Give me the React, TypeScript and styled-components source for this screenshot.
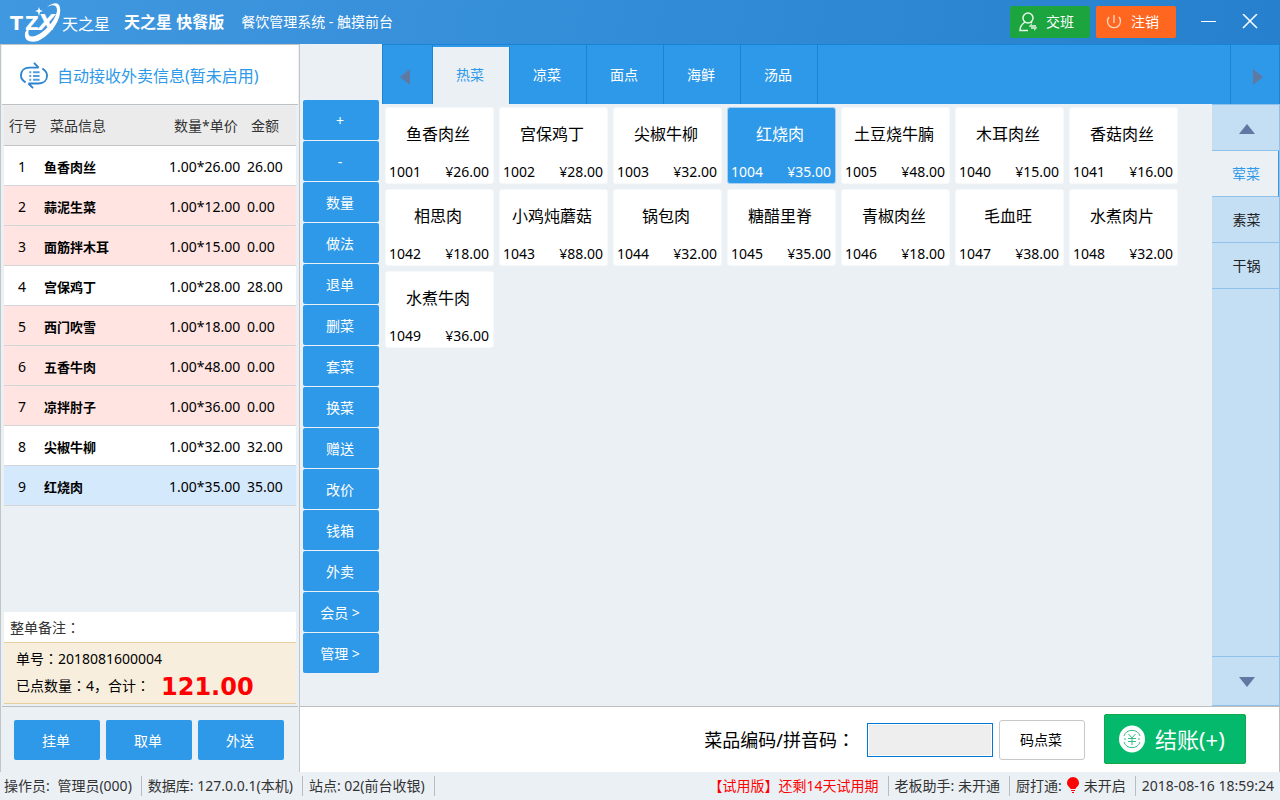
import React from 'react';
import styled, { createGlobalStyle } from 'styled-components';

const blue = '#2e99e8';
const line = '#1c82d3';
const page = '#ebf0f5';

const GlobalStyle = createGlobalStyle`
  * { box-sizing: border-box; }
  body {
    margin: 0;
    background: ${page};
    color: #000;
    font: 14px/20px "Noto Sans", "Noto Sans CJK SC", sans-serif;
  }
  button, input { font: inherit; color: inherit; }
  button { border: 0; padding: 0; cursor: pointer; }
  svg { display: block; flex: none; }
`;

const Page = styled.div`
  display: flex;
  flex-direction: column;
  min-height: 100vh;
`;

const Header = styled.header`
  display: flex;
  align-items: center;
  height: 44px;
  padding: 0 20px 0 8px;
  color: #fff;
  background: linear-gradient(100deg, #4098e0, #2680cd);
`;

const Title = styled.h1`
  margin: 0 17px 0 14px;
  font-size: 16px;
  line-height: 24px;
  font-weight: 600;
`;

const HeaderButtons = styled.div`
  display: flex;
  align-items: center;
  gap: 6px;
  margin-left: auto;
`;

const HeaderButton = styled.button<{ $color: string }>`
  display: flex;
  align-items: center;
  gap: 8px;
  width: 80px;
  height: 32px;
  padding-left: 9px;
  border-radius: 2px;
  color: #fff;
  background: ${(p) => p.$color};
`;

const WindowButton = styled.button`
  display: flex;
  align-items: center;
  justify-content: center;
  width: 20px;
  height: 32px;
  margin-left: 16px;
  color: #fff;
  background: none;
`;

const Body = styled.div`
  display: flex;
  flex: 1;
`;

const OrderPanel = styled.section`
  display: flex;
  flex-direction: column;
  flex: none;
  width: 300px;
  border: 1px solid #c2c5c8;
  border-bottom: 0;
`;

const AutoReceive = styled.button`
  display: flex;
  align-items: center;
  gap: 9px;
  height: 60px;
  margin: 0 1px;
  padding: 2px 0 0 18px;
  border-bottom: 1px solid #c0c0c0;
  background: #fff;
  color: ${blue};
  font-size: 16px;
`;

const OrderTable = styled.table`
  margin: 1px 3px 0;
  border-spacing: 0;
  table-layout: fixed;
`;

const HeadCell = styled.th<{ $width: number; $indent?: number }>`
  width: ${(p) => p.$width}px;
  height: 40px;
  padding: 0 0 0 ${(p) => p.$indent ?? 5}px;
  border-bottom: 1px solid #c4c4c4;
  background: #ebebeb;
  color: #333;
  font-weight: 400;
  text-align: left;
  white-space: nowrap;
`;

const rowColors = { plain: '#fff', free: '#ffe4e1', selected: '#d5e9fd' };

const OrderRow = styled.tr<{ $kind: keyof typeof rowColors }>`
  background: ${(p) => rowColors[p.$kind]};
`;

const Cell = styled.td<{ $center?: boolean; $bold?: boolean }>`
  height: 40px;
  padding: 2px ${(p) => (p.$center ? 4 : 0)}px 0 0;
  border-bottom: 1px solid #d3d6d9;
  text-align: ${(p) => (p.$center ? 'center' : 'left')};
  font-size: ${(p) => (p.$bold ? 13 : 14)}px;
  font-weight: ${(p) => (p.$bold ? 700 : 400)};
  white-space: nowrap;
`;

const Remark = styled.div`
  height: 31px;
  margin: auto 3px 0;
  padding: 6px 6px 0;
  border-bottom: 1px solid #e6cf9d;
  background: #fff;
  color: #333;
`;

const Summary = styled.div`
  height: 61px;
  margin: 0 3px 2px;
  padding: 6px 12px 0;
  border-bottom: 1px solid #e6cf9d;
  background: #f8eedd;
`;

const TotalLine = styled.div`
  display: flex;
  align-items: center;
  height: 34px;
`;

const Colon = styled.span`
  font-family: "Noto Sans CJK TC", sans-serif;
  line-height: 1;
`;

const Total = styled.strong`
  margin-left: 11px;
  padding-top: 2px;
  color: #f00;
  font: 700 24px/34px "DejaVu Sans", sans-serif;
`;

const OrderButtons = styled.div`
  display: flex;
  gap: 6px;
  height: 66px;
  margin: 0 1px;
  padding: 13px 13px 13px 12px;
  border-top: 1px solid #bdbdbd;
`;

const BlueButton = styled.button`
  flex: none;
  width: 86px;
  height: 40px;
  padding: 2px 2px 0 0;
  border-radius: 2px;
  background: ${blue};
  color: #fff;
  white-space: pre;
`;

const Main = styled.main`
  display: flex;
  flex-direction: column;
  flex: 1;
  min-width: 0;
`;

const Workspace = styled.div`
  display: flex;
  flex: 1;
`;

const Actions = styled.nav`
  display: flex;
  flex-direction: column;
  flex: none;
  gap: 1px;
  width: 82px;
  padding: 56px 3px 0;
`;

const ActionButton = styled(BlueButton)`
  width: 76px;
`;

const Menu = styled.section`
  display: flex;
  flex-direction: column;
  flex: 1;
  min-width: 0;
`;

const Tabs = styled.nav`
  display: flex;
  height: 60px;
  border: 1px solid ${line};
  border-bottom: 0;
  background: ${blue};
`;

const Tab = styled.button<{ $active?: boolean }>`
  width: 77px;
  margin-top: ${(p) => (p.$active ? 2 : 0)}px;
  padding: 0 2px ${(p) => (p.$active ? 2 : 0)}px 0;
  border-right: 1px solid ${line};
  background: ${(p) => (p.$active ? page : blue)};
  color: ${(p) => (p.$active ? blue : '#fff')};
`;

const TabArrow = styled.button<{ $end?: boolean }>`
  display: flex;
  align-items: center;
  justify-content: center;
  width: ${(p) => (p.$end ? 49 : 50)}px;
  margin-left: ${(p) => (p.$end ? 'auto' : 0)};
  padding: ${(p) => (p.$end ? '5px 0 0 6px' : '5px 6px 0 0')};
  border-${(p) => (p.$end ? 'left' : 'right')}: 1px solid ${line};
  background: none;
`;

const MenuBody = styled.div`
  display: flex;
  flex: 1;
`;

const Dishes = styled.div`
  display: grid;
  flex: 1;
  grid-template-columns: repeat(auto-fill, 109px);
  grid-auto-rows: 77px;
  align-content: start;
  gap: 5px;
  padding: 3px;
`;

const DishCard = styled.button<{ $active?: boolean }>`
  display: flex;
  flex-direction: column;
  justify-content: space-between;
  padding: 15px 4px 1px 3px;
  border: 1px solid ${(p) => (p.$active ? '#a5d2f4' : '#f6f9fb')};
  border-radius: 3px;
  background: ${(p) => (p.$active ? blue : '#fff')};
  color: ${(p) => (p.$active ? '#fff' : '#000')};
`;

const DishName = styled.span`
  align-self: center;
  padding-right: 2px;
  font-size: 16px;
  line-height: 22px;
`;

const DishInfo = styled.span`
  display: flex;
  justify-content: space-between;
  width: 100%;
`;

const Categories = styled.nav`
  display: flex;
  flex-direction: column;
  width: 68px;
  border-top: 1px solid #8fc1ea;
  border-right: 1px solid #8fc1ea;
  background: #c4dff4;
`;

const Category = styled.button<{ $active?: boolean; $last?: boolean }>`
  display: flex;
  align-items: center;
  justify-content: center;
  height: ${(p) => (p.$last ? 50 : 46)}px;
  margin-top: ${(p) => (p.$last ? 'auto' : 0)};
  padding-left: 2px;
  border-bottom: 1px solid #8fc1ea;
  border-top: ${(p) => (p.$last ? 1 : 0)}px solid #8fc1ea;
  border-right: ${(p) => (p.$active ? 1 : 0)}px solid ${blue};
  background: ${(p) => (p.$active ? page : 'transparent')};
  color: ${(p) => (p.$active ? blue : '#222')};
`;

const Checkout = styled.form`
  display: flex;
  align-items: center;
  justify-content: flex-end;
  height: 66px;
  padding-right: 33px;
  border-top: 1px solid #bdbdbd;
  border-right: 1px solid #bdbdbd;
  background: #fff;
`;

const CodeLabel = styled.label`
  font-size: 18px;
  line-height: 24px;
`;

const CodeInput = styled.input`
  width: 126px;
  height: 34px;
  margin: 0 6px 0 12px;
  padding: 0 6px;
  border: 1px solid #0078d7;
  background: #eee;
  box-shadow: inset 0 0 0 1px #fff;
`;

const CodeButton = styled.button`
  width: 86px;
  height: 40px;
  padding: 1px 2px 0 0;
  border: 1px solid #c8c8c8;
  border-radius: 3px;
  background: #fff;
`;

const PayButton = styled.button`
  display: flex;
  align-items: center;
  gap: 10px;
  width: 142px;
  height: 50px;
  margin: 0 0 2px 19px;
  padding-left: 14px;
  border: 1px solid #12a84a;
  border-radius: 2px;
  background: #04b96c;
  color: #fff;
  font-size: 22px;
  line-height: 28px;
`;

const Status = styled.footer`
  display: flex;
  height: 28px;
  padding: 4px 6px 4px 4px;
  color: #333;
  white-space: nowrap;
`;

const StatusItem = styled.span<{ $alert?: boolean; $push?: boolean; $bare?: boolean }>`
  display: flex;
  gap: 4px;
  margin-left: ${(p) => (p.$push ? 'auto' : 0)};
  padding-right: ${(p) => (p.$bare ? 0 : 9)}px;
  margin-right: ${(p) => (p.$bare ? 0 : 6)}px;
  border-right: ${(p) => (p.$bare ? 0 : 1)}px solid #b9bcc0;
  color: ${(p) => (p.$alert ? '#f00' : 'inherit')};
`;

const Logo = () => (
  <svg width="102" height="42" viewBox="0 0 102 42" fill="#fff" aria-label="TZX 天之星" role="img">
    <g fontFamily="DejaVu Sans" fontWeight="700">
      <text x="2" y="29" fontSize="19">T</text>
      <text x="17" y="29" fontSize="19">Z</text>
      <text x="30" y="29" fontSize="22" fontStyle="italic">X</text>
    </g>
    <path d="M39 6C46 1 51 1 52 7C54 18 43 34 30 40C22 42 16 40 17 32C18 29 20 28 22 26C19 32 20 37 27 35C37 32 49 17 49 9C49 4 45 3 39 6Z" />
    <path d="M31 6L32 9L35 10L32 11L31 15L30 11L27 10L30 9Z" />
    <text x="54" y="29" fontSize="16" fontFamily="Noto Sans CJK SC">天之星</text>
  </svg>
);

const ReceiveIcon = () => (
  <svg width="28" height="28" viewBox="0 0 30 30" fill="none" stroke="#2b84d0" strokeWidth="2">
    <path d="M6 22C3 20 1 18 1 14.500C1 9 5 6 10 6H20M15 1L20 6M24 7C27 9 29 11 29 14.500C29 20 25 23 20 23H9M14 28L9 23" />
    <path d="M10 11H12M14 11H21M10 15H12M14 15H21M10 19H12M14 19H21" stroke="#4e9ede" />
  </svg>
);

const ShiftIcon = () => (
  <svg width="19" height="20" viewBox="0 0 19 20" fill="none" stroke="#e6f8e9" strokeWidth="1.500">
    <circle cx="9" cy="6" r="5" />
    <path d="M6 10C3 12 1 14 1 18.500H9M12 10L13 11" />
    <path d="M10 14L13 11V13H17V15H10ZM18 16L15 19V17H12V15H18Z" fill="#b4e2bd" stroke="none" />
  </svg>
);

const PowerIcon = () => (
  <svg width="18" height="18" viewBox="0 0 18 18" fill="none" stroke="#ffd3bf" strokeWidth="1.400">
    <path d="M4 4A6.500 6.500 0 1 0 14 4M9 2V10" />
  </svg>
);

const CoinIcon = () => (
  <svg width="26" height="28" viewBox="0 0 26 28">
    <ellipse cx="13" cy="14" rx="13" ry="13.500" fill="#fff" />
    <g fill="none" stroke="#35bd86" strokeWidth="1">
      <path d="M5 11A8.500 8.500 0 0 1 21 11M5 17A8.500 8.500 0 0 0 21 17M5 14H7M19 14H21" />
      <path d="M9.500 9L13 13L16.500 9M9 13.500H17M9 16.500H17M13 13V20" />
    </g>
  </svg>
);

const BulbIcon = () => (
  <svg width="14" height="18" viewBox="0 0 14 18" fill="#f00">
    <path d="M7 1A6 6 0 0 1 13 7C13 10 10 11 9.500 13H4.500C4 11 1 10 1 7A6 6 0 0 1 7 1Z" />
    <path d="M5 14H9V15H5ZM6 16H8V17H6Z" />
  </svg>
);

const arrowPaths = {
  left: 'M13 0V16L3 8Z',
  right: 'M3 0V16L13 8Z',
  up: 'M0 14H16L8 4Z',
  down: 'M0 4H16L8 14Z',
};

const Arrow = ({ to }: { to: keyof typeof arrowPaths }) => (
  <svg width="16" height="16" viewBox="0 0 16 16" fill="#5f79a3">
    <path d={arrowPaths[to]} />
  </svg>
);

const orders: [string, string, string, keyof typeof rowColors][] = [
  ['鱼香肉丝', '1.00*26.00', '26.00', 'plain'],
  ['蒜泥生菜', '1.00*12.00', '0.00', 'free'],
  ['面筋拌木耳', '1.00*15.00', '0.00', 'free'],
  ['宫保鸡丁', '1.00*28.00', '28.00', 'plain'],
  ['西门吹雪', '1.00*18.00', '0.00', 'free'],
  ['五香牛肉', '1.00*48.00', '0.00', 'free'],
  ['凉拌肘子', '1.00*36.00', '0.00', 'free'],
  ['尖椒牛柳', '1.00*32.00', '32.00', 'plain'],
  ['红烧肉', '1.00*35.00', '35.00', 'selected'],
];

const actions = [
  '+', '-', '数量', '做法', '退单', '删菜', '套菜', '换菜',
  '赠送', '改价', '钱箱', '外卖', '会员 >', '管理 >',
];

const tabs = ['热菜', '凉菜', '面点', '海鲜', '汤品'];

const dishes: [string, string, string][] = [
  ['鱼香肉丝', '1001', '26.00'],
  ['宫保鸡丁', '1002', '28.00'],
  ['尖椒牛柳', '1003', '32.00'],
  ['红烧肉', '1004', '35.00'],
  ['土豆烧牛腩', '1005', '48.00'],
  ['木耳肉丝', '1040', '15.00'],
  ['香菇肉丝', '1041', '16.00'],
  ['相思肉', '1042', '18.00'],
  ['小鸡炖蘑菇', '1043', '88.00'],
  ['锅包肉', '1044', '32.00'],
  ['糖醋里脊', '1045', '35.00'],
  ['青椒肉丝', '1046', '18.00'],
  ['毛血旺', '1047', '38.00'],
  ['水煮肉片', '1048', '32.00'],
  ['水煮牛肉', '1049', '36.00'],
];

export default function App() {
  return (
    <>
      <GlobalStyle />
      <Page>
        <Header>
          <Logo />
          <Title>天之星 快餐版</Title>
          <span>餐饮管理系统 - 触摸前台</span>
          <HeaderButtons>
            <HeaderButton $color="#1ca53f"><ShiftIcon />交班</HeaderButton>
            <HeaderButton $color="#ff6620"><PowerIcon />注销</HeaderButton>
            <WindowButton aria-label="最小化">
              <svg width="16" height="16" stroke="currentColor"><path d="M1 7.500H16" /></svg>
            </WindowButton>
            <WindowButton aria-label="关闭">
              <svg width="16" height="16" stroke="currentColor" strokeWidth="1.500"><path d="M1 0L15 14M15 0L1 14" /></svg>
            </WindowButton>
          </HeaderButtons>
        </Header>

        <Body>
          <OrderPanel>
            <AutoReceive><ReceiveIcon />自动接收外卖信息(暂未启用)</AutoReceive>
            <OrderTable>
              <thead>
                <tr>
                  <HeadCell $width={40}>行号</HeadCell>
                  <HeadCell $width={125} $indent={6}>菜品信息</HeadCell>
                  <HeadCell $width={78}>数量*单价</HeadCell>
                  <HeadCell $width={49} $indent={4}>金额</HeadCell>
                </tr>
              </thead>
              <tbody>
                {orders.map(([name, qty, sum, kind], i) => (
                  <OrderRow key={name} $kind={kind}>
                    <Cell $center>{i + 1}</Cell>
                    <Cell $bold>{name}</Cell>
                    <Cell>{qty}</Cell>
                    <Cell>{sum}</Cell>
                  </OrderRow>
                ))}
              </tbody>
            </OrderTable>
            <Remark>整单备注<Colon>：</Colon></Remark>
            <Summary>
              <div>单号<Colon>：</Colon>2018081600004</div>
              <TotalLine>
                <span>已点数量<Colon>：</Colon>4，合计<Colon>：</Colon></span>
                <Total>121.00</Total>
              </TotalLine>
            </Summary>
            <OrderButtons>
              <BlueButton>挂单</BlueButton>
              <BlueButton>取单</BlueButton>
              <BlueButton>外送</BlueButton>
            </OrderButtons>
          </OrderPanel>

          <Main>
            <Workspace>
              <Actions>
                {actions.map((a) => <ActionButton key={a}>{a}</ActionButton>)}
              </Actions>
              <Menu>
                <Tabs>
                  <TabArrow aria-label="上一页"><Arrow to="left" /></TabArrow>
                  {tabs.map((t, i) => <Tab key={t} $active={i === 0}>{t}</Tab>)}
                  <TabArrow $end aria-label="下一页"><Arrow to="right" /></TabArrow>
                </Tabs>
                <MenuBody>
                  <Dishes>
                    {dishes.map(([name, code, price]) => (
                      <DishCard key={code} $active={code === '1004'}>
                        <DishName>{name}</DishName>
                        <DishInfo><span>{code}</span><span>¥{price}</span></DishInfo>
                      </DishCard>
                    ))}
                  </Dishes>
                  <Categories>
                    <Category aria-label="向上"><Arrow to="up" /></Category>
                    <Category $active>荤菜</Category>
                    <Category>素菜</Category>
                    <Category>干锅</Category>
                    <Category $last aria-label="向下"><Arrow to="down" /></Category>
                  </Categories>
                </MenuBody>
              </Menu>
            </Workspace>
            <Checkout>
              <CodeLabel htmlFor="dish-code">菜品编码/拼音码<Colon>：</Colon></CodeLabel>
              <CodeInput id="dish-code" />
              <CodeButton type="button">码点菜</CodeButton>
              <PayButton type="button"><CoinIcon />结账(+)</PayButton>
            </Checkout>
          </Main>
        </Body>

        <Status>
          <StatusItem><span>操作员:</span> <span>&nbsp;管理员(000)</span></StatusItem>
          <StatusItem>数据库: 127.0.0.1(本机)</StatusItem>
          <StatusItem>站点: 02(前台收银)</StatusItem>
          <StatusItem $push $alert>【试用版】还剩14天试用期</StatusItem>
          <StatusItem>老板助手: 未开通</StatusItem>
          <StatusItem>厨打通: <BulbIcon /> 未开启</StatusItem>
          <StatusItem $bare>2018-08-16 18:59:24</StatusItem>
        </Status>
      </Page>
    </>
  );
}
